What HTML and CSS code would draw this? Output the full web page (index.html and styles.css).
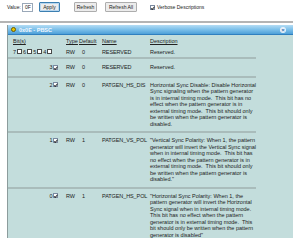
FILE: index.html
```html
<!DOCTYPE html>
<html lang="en">
<head>
    <meta charset="UTF-8">
    <title>PBSC register</title>
    <link rel="stylesheet" href="styles.css">
</head>
<body>
    <!-- toolbar -->
    <div class="toolbar">
        <span class="value-label">Value:</span>
        <span class="value-input">0F</span>
        <button class="btn btn-apply">Apply</button>
        <button class="btn btn-refresh">Refresh</button>
        <button class="btn btn-all">Refresh All</button>
        <span class="verbose"><span class="cb checked"></span>Verbose Descriptions</span>
    </div>
    <div class="divider"></div>

    <!-- register panel -->
    <div class="panel">
        <div class="panel-title">
            <span class="reg-icon"></span>
            <span class="title-text">0x0E - PBSC</span>
            <span class="close-icon">&times;</span>
        </div>
        <div class="panel-body">
            <div class="field head">
                <div class="bits bits-left"><u>Bit(s)</u></div>
                <div><u>Type</u></div>
                <div><u>Default</u></div>
                <div><u>Name</u></div>
                <div><u>Description</u></div>
            </div>
            <div class="field first">
                <div class="bits bits-left">7<span class="cb"></span>6<span class="cb"></span>5<span class="cb"></span>4<span class="cb"></span></div>
                <div>RW</div>
                <div class="def">0</div>
                <div class="name">RESERVED</div>
                <div>Reserved.</div>
            </div>
            <div class="field single">
                <div class="bits">3<span class="cb checked"></span></div>
                <div>RW</div>
                <div class="def">0</div>
                <div class="name">RESERVED</div>
                <div>Reserved.</div>
            </div>
            <div class="field">
                <div class="bits">2<span class="cb checked"></span></div>
                <div>RW</div>
                <div class="def">0</div>
                <div class="name">PATGEN_HS_DIS</div>
                <div class="desc">Horizontal Sync Disable: Disable Horizontal<br>Sync signaling when the pattern generator<br>is in internal timing mode.&nbsp; This bit has no<br>effect when the pattern generator is in<br>external timing mode.&nbsp; This bit should only<br>be written when the pattern generator is<br>disabled.</div>
            </div>
            <div class="field">
                <div class="bits">1<span class="cb checked"></span></div>
                <div>RW</div>
                <div class="def">1</div>
                <div class="name">PATGEN_VS_POL</div>
                <div class="desc">"Vertical Sync Polarity: When 1, the pattern<br>generator will invert the Vertical Sync signal<br>when in internal timing mode.&nbsp; This bit has<br>no effect when the pattern generator is in<br>external timing mode.&nbsp; This bit should only<br>be written when the pattern generator is<br>disabled."</div>
            </div>
            <div class="field last">
                <div class="bits">0<span class="cb checked"></span></div>
                <div>RW</div>
                <div class="def">1</div>
                <div class="name">PATGEN_HS_POL</div>
                <div class="desc">"Horizontal Sync Polarity: When 1, the<br>pattern generator will invert the Horizontal<br>Sync signal when in internal timing mode.<br>This bit has no effect when the pattern<br>generator is in external timing mode.&nbsp; This<br>bit should only be written when the pattern<br>generator is disabled"</div>
            </div>
        </div>
    </div>
</body>
</html>
```

FILE: styles.css
```css
* {
    box-sizing: border-box;
}

body {
    margin: 0;
    background-color: #ffffff;
    font-family: "Liberation Sans", Arial, sans-serif;
    font-size: 5px;
    color: #222222;
    overflow: hidden;
}

/* toolbar */
.toolbar {
    display: flex;
    align-items: center;
    height: 14px;
    padding-left: 7px;
}

.value-label {
    width: 15px;
}

.value-input {
    width: 11px;
    height: 9px;
    line-height: 7px;
    padding-left: 2px;
    border: 1px solid #9aa8b8;
    background-color: #ffffff;
}

.btn {
    font-family: inherit;
    font-size: 5px;
    height: 10px;
    padding: 0;
    background-color: #ececec;
    border: 1px solid #adadad;
    border-radius: 1px;
    color: #222222;
}

.btn-apply {
    margin-left: 6px;
    width: 21px;
    border: 1px solid #3c7fb1;
    box-shadow: inset 0 0 0 1px #b8d6ee;
}

.btn-refresh {
    margin-left: 14px;
    width: 23px;
}

.btn-all {
    margin-left: 8px;
    width: 32px;
}

.verbose {
    display: flex;
    align-items: center;
    margin-left: 13px;
}

.verbose .cb {
    margin: 0 2px 0 0;
}

.divider {
    height: 2px;
    margin-top: 7px;
    background-color: #b4b4b4;
}

/* panel */
.panel {
    margin: 2px 0 0 7px;
    border-left: 1px solid #8c9c9c;
}

.panel-title {
    display: flex;
    align-items: center;
    height: 10px;
    padding-left: 3px;
    background-image: linear-gradient(#b4dcf4 0%, #7cc0ea 50%, #4d9fd8 100%);
    border-bottom: 1px solid #2f7fbf;
    font-size: 5.5px;
    font-weight: bold;
}

.reg-icon {
    width: 5px;
    height: 5px;
    border-radius: 50%;
    background-color: #e8c800;
    border: 1px solid #6a5a00;
    margin-right: 3px;
}

.title-text {
    flex: 1;
    color: #f4f8ff;
}

.close-icon {
    width: 6px;
    height: 6px;
    margin-right: 7px;
    border-radius: 50%;
    background-color: #e8f2fb;
    color: #2f6fb0;
    font-size: 6px;
    line-height: 6px;
    text-align: center;
}

.panel-body {
    background-color: #c3dddc;
    padding-top: 3px;
    height: 203px;
    font-size: 5.5px;
}

.field {
    display: grid;
    grid-template-columns: 58px 13px 23px 48px 106px;
    width: 248px;
    line-height: 6.5px;
    padding: 4px 0;
    border-bottom: 2px solid #a9bcbb;
    white-space: nowrap;
}

.field.head {
    border-bottom: 0;
    padding: 0;
}

.field.first {
    padding: 4px 0 2px;
}

.field.single {
    padding: 5px 0;
}

.field.last {
    border-bottom: 0;
}

.name {
    letter-spacing: -0.1px;
}

.bits {
    display: flex;
    align-items: center;
    justify-content: flex-end;
    height: 6.5px;
    padding-right: 8px;
}

.bits-left {
    justify-content: flex-start;
    padding-left: 5px;
}

.def {
    padding-left: 3px;
}

/* checkboxes */
.cb {
    position: relative;
    display: inline-block;
    width: 5px;
    height: 5px;
    margin: 0 1px 0 1px;
    background-color: #ffffff;
    border: 1px solid #4a4a4a;
}

.bits .cb {
    margin: 0 1.5px 0 0.5px;
}

.bits .cb:last-child {
    margin-right: 0;
}

.cb.checked {
    border-color: #7a8aa0;
}

.cb.checked::after {
    content: "";
    position: absolute;
    left: 1px;
    top: 0;
    width: 1px;
    height: 2.5px;
    border-right: 1px solid #333333;
    border-bottom: 1px solid #333333;
    transform: rotate(40deg);
}
```
